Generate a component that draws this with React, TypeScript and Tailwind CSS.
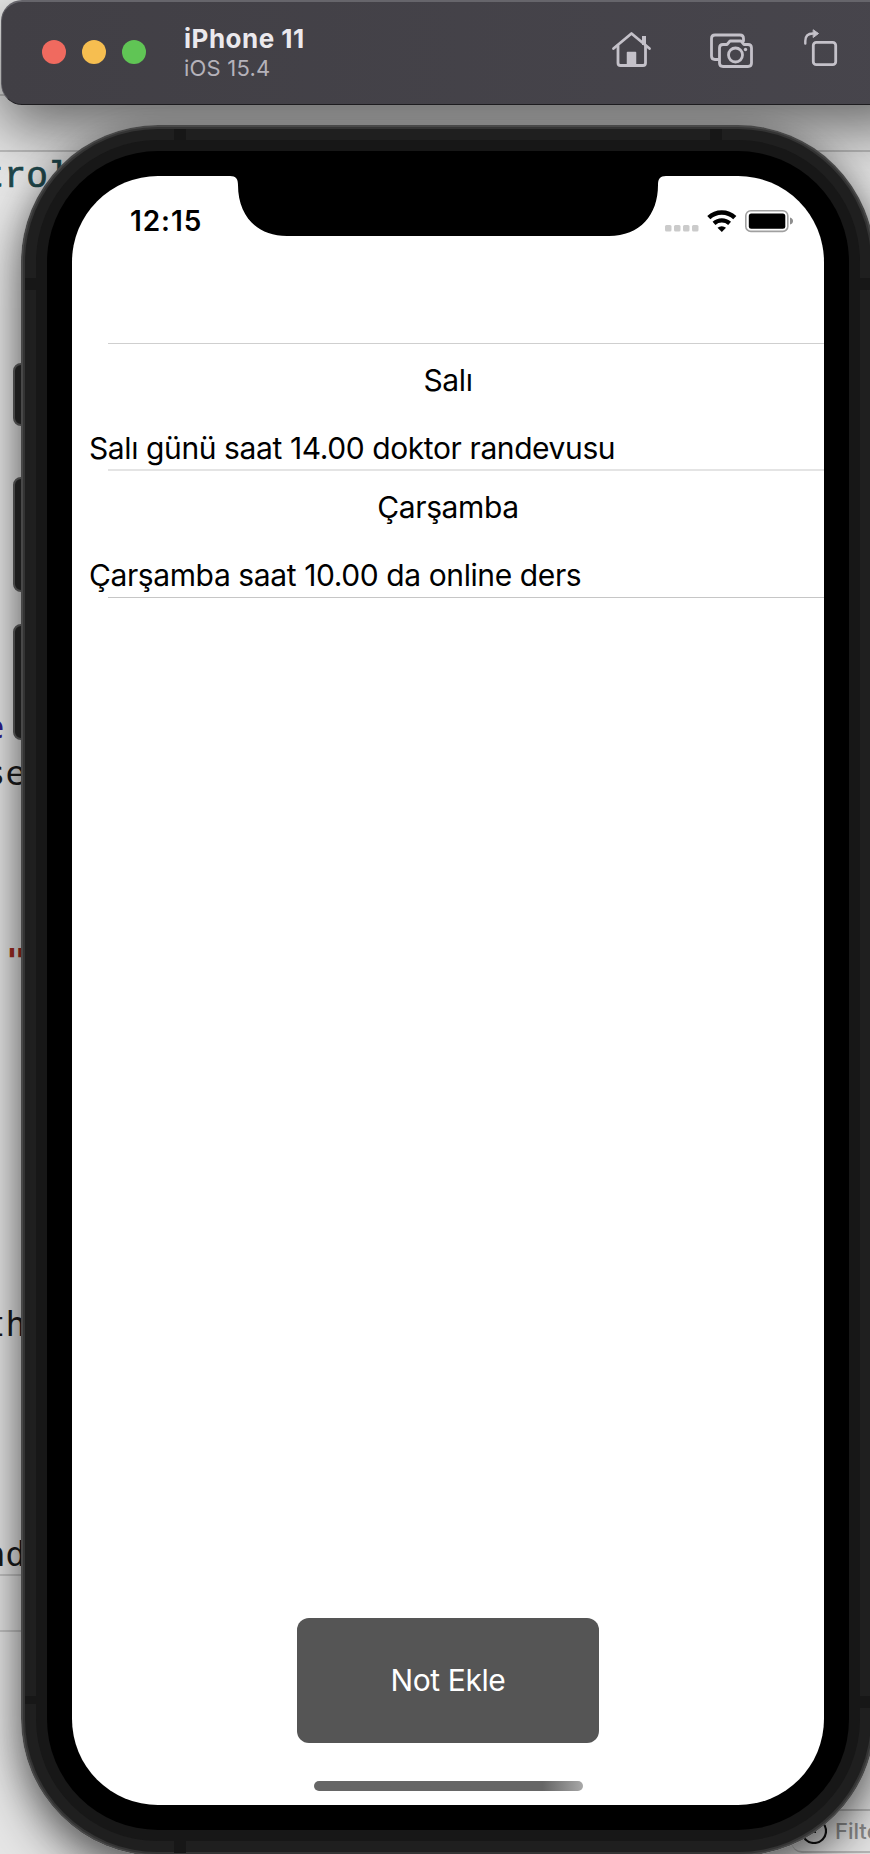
import React from 'react';

function TitleBar() {
  return (
    <header className="absolute left-[1px] top-0 z-10 flex h-[105px] w-[920px] items-center rounded-[21px] border border-t-2 border-[#1d1c1f] border-l-[#5b5a60] border-t-[#66656b] bg-linear-to-r from-[#413f45] to-[#47454c] pl-[40px]">
      <div className="-mt-[2px] flex gap-4">
        <span className="h-6 w-6 rounded-full bg-[#f06a5f]" />
        <span className="h-6 w-6 rounded-full bg-[#f6be50]" />
        <span className="h-6 w-6 rounded-full bg-[#60c555]" />
      </div>
      <div className="-mt-[2px] ml-[38px] w-[416px]">
        <div className="text-[26px] leading-[31px] font-bold tracking-[0.5px] text-[#ebe9ed]">iPhone 11</div>
        <div className="text-[22px] leading-[28px] tracking-[0.2px] text-[#b5b2ba]">iOS 15.4</div>
      </div>
      <svg className="-mt-[6px] h-[60px] w-[250px]" viewBox="600 20 250 60" fill="none" stroke="#c4c1c9" strokeWidth="2.8" strokeLinecap="round" strokeLinejoin="round">
        <path d="M613.5 48.5 L631.5 33.5 L649.5 48.5" />
        <path d="M618 46 V63 Q618 65.5 620.500 65.5 H643 Q645.500 65.5 645.500 63 V46" />
        <path d="M644 45 V36" strokeWidth="4" strokeLinecap="butt" />
        <path d="M627.500 52.500 h8 V65 h-8 Z" fill="#c4c1c9" strokeWidth="1.500" />
        <path d="M718 59.500 H715 Q711.500 59.500 711.500 56 V38.500 Q711.500 35 715 35 H740 Q743.500 35 743.500 38.500 V41" />
        <path d="M719.500 48 Q719.500 44.500 723 44.500 H727 L730 41 H741 L744 44.500 H748 Q751.500 44.500 751.500 48 V63 Q751.500 66.500 748 66.500 H723 Q719.500 66.500 719.500 63 Z" />
        <circle cx="735.500" cy="55" r="7" />
        <circle cx="745.500" cy="49.500" r="1.700" fill="#c4c1c9" stroke="none" />
        <rect x="813.300" y="42.300" width="22.400" height="22.400" rx="3" />
        <path d="M805.300 43.500 V41 Q805.300 33.500 813 33.500" strokeWidth="2.400" />
        <path d="M813.500 30 L818.500 33.500 L813.500 37.300 Z" fill="#c4c1c9" strokeWidth="1" />
      </svg>
    </header>
  );
}

function Editor() {
  return (
    <div className="flex h-[1854px] w-[870px] flex-col bg-[#e6e6e6] font-['DejaVu_Sans_Mono',monospace] text-[34px] leading-[40px] whitespace-pre text-[#1b1b1c]">
      <div className="h-[94px]" />
      <div className="h-[56px] border-t-2 border-[#bdbdbd]" />
      <div className="flex h-[557px] border-t-2 border-[#bdbdbd] pt-[6px] font-['Liberation_Mono',monospace] text-[36px] text-[#21484c]">
        <span className="-ml-[17px] [-webkit-text-stroke:0.7px_#21484c]">trol</span>
      </div>
      <div className="flex h-[46px] text-[#2f1c8c]"><span className="-ml-[16px]">e</span></div>
      <div className="flex h-[188px]"><span className="-ml-[15px]">se</span></div>
      <div className="flex h-[363px] font-bold text-[#a02c22]"><span className="ml-[6px]">"</span></div>
      <div className="flex h-[230px]"><span className="-ml-[15px]">th</span></div>
      <div className="flex h-[40px]"><span className="-ml-[15px]">nd</span></div>
      <div className="h-[56px] border-t-2 border-[#c4c4c4]" />
      <div className="h-[179px] border-t-2 border-[#c4c4c4]" />
      <div className="ml-[792px] flex h-[44px] items-center rounded-bl-[10px] border-y-2 border-[#b8b8b8] pl-[9px] font-[Inter,sans-serif] text-[22px] text-[#8c8c8c]">
        <svg className="h-[26px] w-[26px] shrink-0" viewBox="0 0 26 26" fill="none" stroke="#111" strokeWidth="2.200">
          <circle cx="13" cy="13" r="12" /><path d="M7 10H17M9 14H15" />
        </svg>
        <span className="ml-[8px] font-medium">Filter</span>
      </div>
    </div>
  );
}

function StatusBar() {
  return (
    <div className="flex h-[168px] items-start">
      <div className="w-[158px] pt-[27px] pl-[58px] text-[28px] leading-[36px] font-semibold tracking-[0.9px]">12:15</div>
      <svg className="h-[61px] w-[436px]" viewBox="0 0 436 61">
        <path d="M0 0 C6 0 8 3 8 9 C8 39 26 60 57 60 H379 C410 60 428 39 428 9 C428 3 430 0 436 0 Z" fill="#000" />
      </svg>
      <svg className="h-[61px] w-[158px] overflow-visible" viewBox="666 176 158 61">
        <g fill="#cbcbcb">
          <rect x="665" y="225" width="6.500" height="6.500" rx="1.500" />
          <rect x="674" y="225" width="6.500" height="6.500" rx="1.500" />
          <rect x="683" y="225" width="6.500" height="6.500" rx="1.500" />
          <rect x="692" y="225" width="6.500" height="6.500" rx="1.500" />
        </g>
        <g fill="none" stroke="#000" strokeWidth="4.600">
          <path d="M708.800 217.600 A19 19 0 0 1 734.800 217.600" />
          <path d="M714 223.400 A11.500 11.500 0 0 1 729.600 223.400" strokeWidth="4.200" />
        </g>
        <path d="M717.500 227.800 A6.500 6.500 0 0 1 726 227.800 L721.800 232 Z" />
        <rect x="745.800" y="210.800" width="42" height="20.600" rx="5" fill="none" stroke="#a0a0a0" strokeWidth="1.600" />
        <rect x="748.800" y="213.500" width="36.500" height="15.300" rx="2.500" />
        <path d="M790 217.500 Q793 218.500 793 221 Q793 223.500 790 224.500 Z" fill="#8e8e8e" />
      </svg>
    </div>
  );
}

const notes = [
  { day: 'Salı', text: 'Salı günü saat 14.00 doktor randevusu', line: 'bg-[#e4e4e4] h-[2px]' },
  { day: 'Çarşamba', text: 'Çarşamba saat 10.00 da online ders', line: 'bg-[#c6c6c6] h-px mt-[1px]' },
];

function Screen() {
  return (
    <div className="flex h-[1629px] w-[752px] flex-col overflow-hidden rounded-[86px] bg-white text-black">
      <StatusBar />
      <div className="-mt-px ml-[36px] h-px shrink-0 bg-[#cfcfcf]" />
      {notes.map((n) => (
        <div key={n.day} className="text-[30px] leading-[36px] tracking-[-0.4px]">
          <div className="h-[68px] pt-[18px] text-center">{n.day}</div>
          <div className="h-[57px] pt-[18px] pl-[17px] whitespace-nowrap">{n.text}</div>
          <div className={`ml-[36px] ${n.line}`} />
        </div>
      ))}
      <div className="flex grow flex-col items-center justify-end">
        <button className="h-[125px] w-[302px] rounded-[12px] bg-[#555555] pb-[1px] text-[30px] tracking-[-0.4px] text-white">Not Ekle</button>
        <div className="mt-[38px] mb-[14px] h-[10px] w-[269px] rounded-full bg-linear-to-r from-[#666] via-[#666] via-85% to-[#a8a8a8]" />
      </div>
    </div>
  );
}

function SideKey({ box }: { box: string }) {
  return <div className={`absolute left-[13px] w-[14px] rounded-l-[8px] border-2 border-[#454545] bg-[#1c1c1c] ${box}`} />;
}

function Band({ box }: { box: string }) {
  return <div className={`absolute bg-[#171717] ${box}`} />;
}

function Device() {
  return (
    <>
      <div className="absolute top-0 left-[1px] h-[105px] w-[920px] rounded-[21px] shadow-[0_24px_60px_rgba(0,0,0,0.55)]" />
      <div className="absolute top-[125px] left-[21px] h-[1731px] w-[854px] rounded-[137px] shadow-[0_22px_50px_rgba(0,0,0,0.5),0_4px_30px_rgba(0,0,0,0.25)]" />
      <SideKey box="top-[363px] h-[63px]" />
      <SideKey box="top-[477px] h-[115px]" />
      <SideKey box="top-[624px] h-[116px]" />
      <div className="absolute top-[125px] left-[21px] h-[1731px] w-[854px] rounded-[137px] bg-[#484848] p-[2px]">
        <div className="h-full rounded-[135px] bg-[#343434] p-[2px]">
          <div className="h-full rounded-[133px] bg-[#1f1f1f] p-[11px]">
            <div className="h-full rounded-[122px] bg-[#171717] p-[11px]">
              <div className="h-full rounded-[111px] bg-black p-[25px]">
                <Screen />
              </div>
            </div>
          </div>
        </div>
      </div>
      <Band box="left-[174px] top-[129px] h-[13px] w-[12px]" />
      <Band box="left-[710px] top-[129px] h-[13px] w-[12px]" />
      <Band box="left-[25px] top-[278px] h-[12px] w-[12px]" />
      <Band box="left-[859px] top-[278px] h-[12px] w-[12px]" />
      <Band box="left-[25px] top-[1696px] h-[8px] w-[12px]" />
      <Band box="left-[859px] top-[1696px] h-[12px] w-[12px]" />
      <Band box="left-[174px] top-[1841px] h-[12px] w-[12px]" />
    </>
  );
}

export default function App() {
  return (
    <main className="relative h-[1854px] w-[870px] overflow-hidden font-[Inter,sans-serif]">
      <Editor />
      <Device />
      <TitleBar />
    </main>
  );
}
